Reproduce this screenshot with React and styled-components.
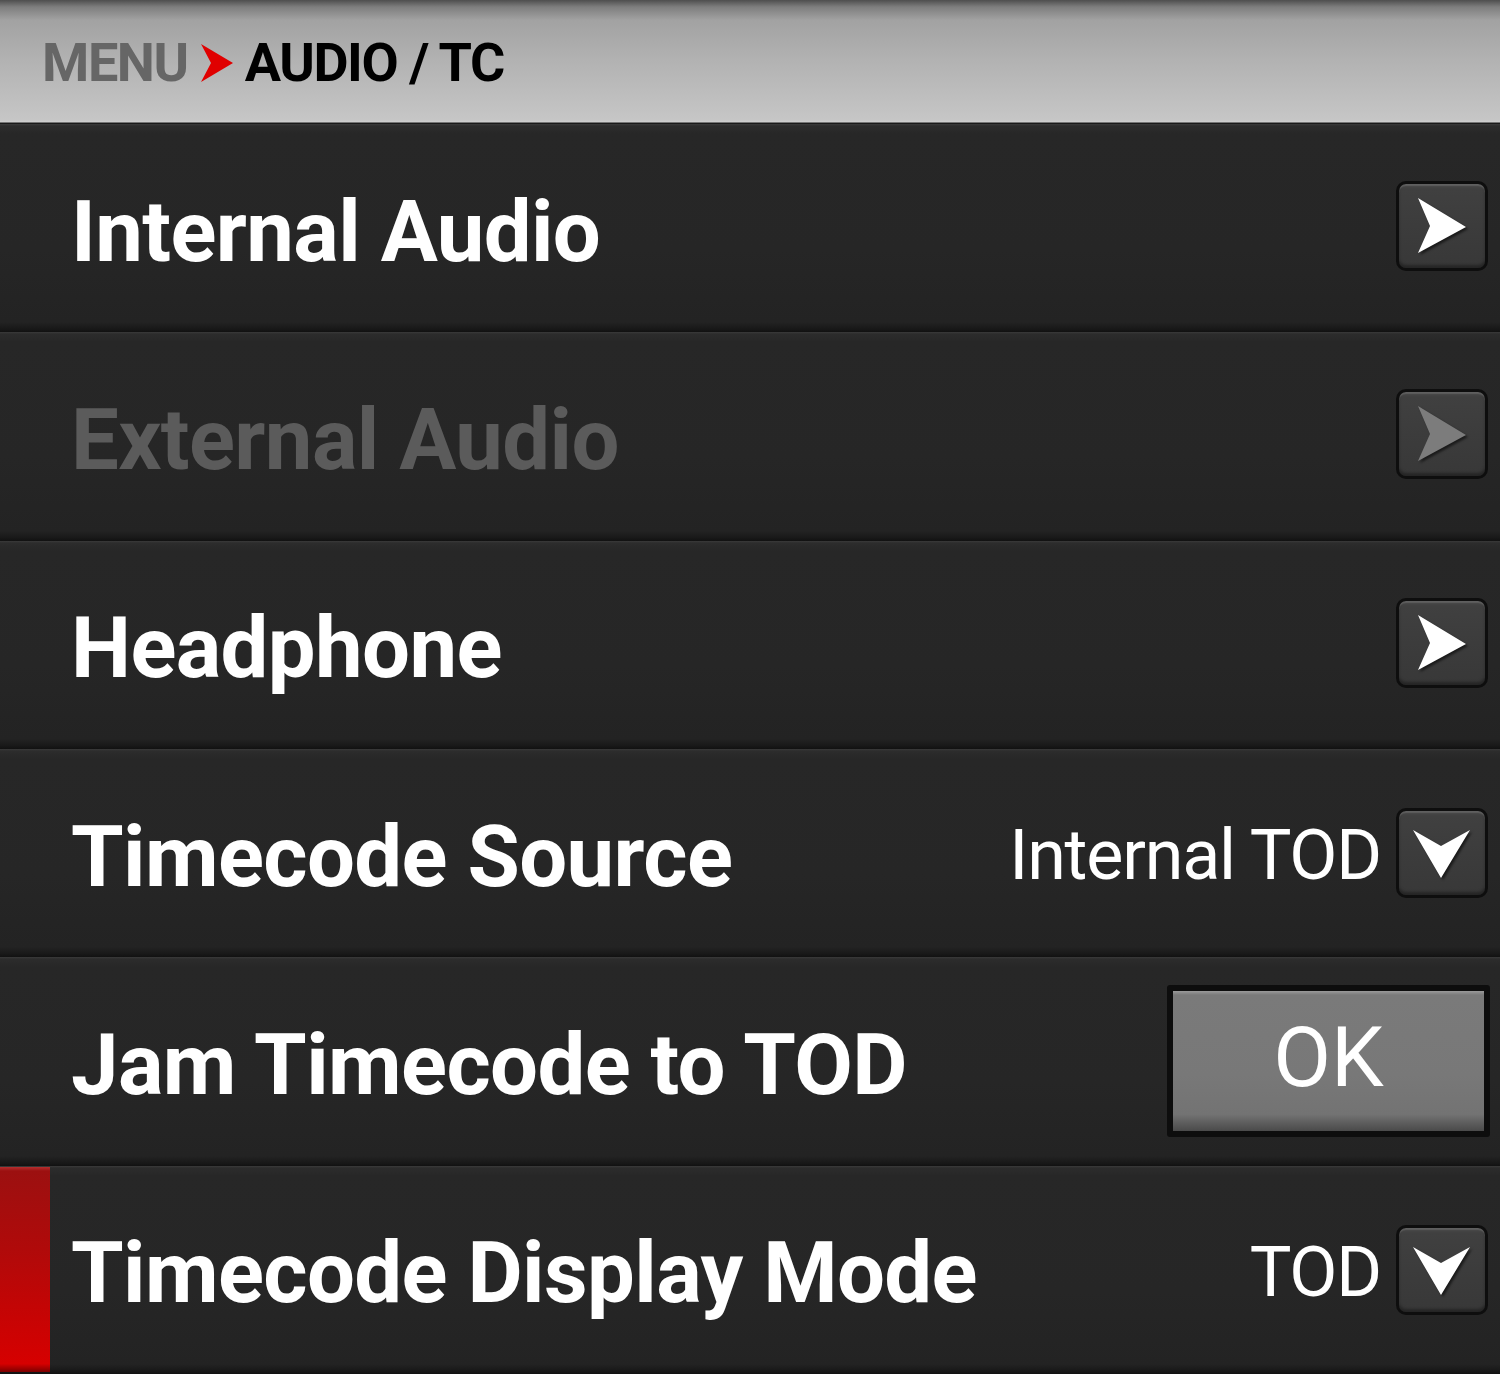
import React from "react";
import styled, { createGlobalStyle } from "styled-components";

const Global = createGlobalStyle`
  html, body { margin: 0; padding: 0; background: #262626; }
  body { font-family: Roboto, "Liberation Sans", sans-serif; }
  * { box-sizing: border-box; }
`;

const Screen = styled.div`
  width: 1500px;
  height: 1374px;
  display: flex;
  flex-direction: column;
  background: #262626;
  overflow: hidden;
`;

const Header = styled.div`
  height: 124px;
  flex: none;
  display: flex;
  align-items: center;
  gap: 11px;
  padding: 2px 0 0 42px;
  background: linear-gradient(
    to bottom,
    #4e4e4e 0px,
    #7e7e7e 7px,
    #a2a2a2 20px,
    #b2b2b2 60px,
    #c6c6c6 120px,
    #d0d0d0 122px,
    #1a1a1a 123px
  );
`;

const Crumb = styled.span`
  font-family: Roboto, "Liberation Sans", sans-serif;
  font-weight: 700;
  font-size: 54px;
  line-height: 1;
  letter-spacing: -1.4px;
  color: ${(p) => (p.$current ? "#000" : "#666")};
`;

const Row = styled.div`
  flex: 1;
  position: relative;
  display: flex;
  align-items: center;
  padding: 0 12px 0 71px;
  background: linear-gradient(
    to bottom,
    #3a3a3a 0px,
    #2c2c2c 2px,
    #272727 10px,
    #262626 60%,
    #232323 calc(100% - 10px),
    #181818 calc(100% - 3px),
    #111 100%
  );
`;

const Marker = styled.div`
  position: absolute;
  left: 0;
  top: 1px;
  bottom: 2px;
  width: 50px;
  background: linear-gradient(to bottom, #b43030 0px, #9c1010 4px, #b00a0a 40%, #d60000 96%, #7a0000 100%);
`;

const Label = styled.div`
  flex: 1;
  padding-top: 8px;
  font-family: Roboto, "Liberation Sans", sans-serif;
  font-weight: 700;
  font-size: 85px;
  letter-spacing: -0.6px;
  line-height: 1;
  color: ${(p) => (p.$disabled ? "#5b5b5b" : "#fff")};
  white-space: nowrap;
`;

const Value = styled.div`
  padding-top: 4px;
  font-family: Roboto, "Liberation Sans", sans-serif;
  font-weight: 400;
  font-size: 70px;
  letter-spacing: -1.2px;
  line-height: 1;
  color: #fff;
  margin-right: 15px;
  white-space: nowrap;
`;

const IconButton = styled.div`
  width: 92px;
  height: 90px;
  flex: none;
  border-radius: 10px;
  border: 3px solid #0e0e0e;
  background: linear-gradient(to bottom, #4a4a4a 0px, #404040 5px, #3c3c3c 50%, #383838 100%);
  box-shadow: inset 0 2px 1px rgba(255, 255, 255, 0.12), inset 0 -3px 3px rgba(0, 0, 0, 0.35);
  display: flex;
  align-items: center;
  justify-content: center;
  margin-top: ${(p) => p.$offset || 0}px;
  svg {
    filter: drop-shadow(2px 2px 1px rgba(0, 0, 0, 0.55));
  }
`;

const OkButton = styled.div`
  width: 323px;
  height: 152px;
  flex: none;
  margin-right: -2px;
  border: 6px solid #0d0d0d;
  border-radius: 3px;
  background: linear-gradient(to bottom, #9a9a9a 0px, #7a7a7a 4px, #787878 60%, #737373 88%, #4a4a4a 100%);
  display: flex;
  align-items: center;
  justify-content: center;
  font-family: Roboto, "Liberation Sans", sans-serif;
  font-weight: 400;
  font-size: 84px;
  line-height: 1;
  color: #fff;
  padding-bottom: 6px;
`;

const RightArrow = ({ color }) => (
  <svg width="56" height="60" viewBox="0 0 56 60">
    <polygon points="4,2 52,31 4,57 16,30" fill={color} />
  </svg>
);

const DownArrow = () => (
  <svg width="62" height="54" viewBox="0 0 62 54">
    <polygon points="2,4 30,20 59,4 30,52" fill="#fff" />
  </svg>
);

const RedChevron = () => (
  <svg width="35" height="38" viewBox="0 0 35 38">
    <polygon points="2,0 34,19 2,38 12,19" fill="#e00000" />
  </svg>
);

const rows = [
  { label: "Internal Audio", type: "nav" },
  { label: "External Audio", type: "nav", disabled: true },
  { label: "Headphone", type: "nav" },
  { label: "Timecode Source", type: "select", value: "Internal TOD" },
  { label: "Jam Timecode to TOD", type: "ok" },
  { label: "Timecode Display Mode", type: "select", value: "TOD", active: true },
];

export default function App() {
  return (
    <>
      <Global />
      <Screen>
        <Header>
          <Crumb>MENU</Crumb>
          <RedChevron />
          <Crumb $current>AUDIO / TC</Crumb>
        </Header>
        {rows.map((r) => (
          <Row key={r.label}>
            {r.active && <Marker />}
            <Label $disabled={r.disabled}>{r.label}</Label>
            {r.type === "nav" && (
              <IconButton $offset={-4}>
                <RightArrow color={r.disabled ? "#7c7c7c" : "#fff"} />
              </IconButton>
            )}
            {r.type === "select" && (
              <>
                <Value>{r.value}</Value>
                <IconButton>
                  <DownArrow />
                </IconButton>
              </>
            )}
            {r.type === "ok" && <OkButton>OK</OkButton>}
          </Row>
        ))}
      </Screen>
    </>
  );
}
